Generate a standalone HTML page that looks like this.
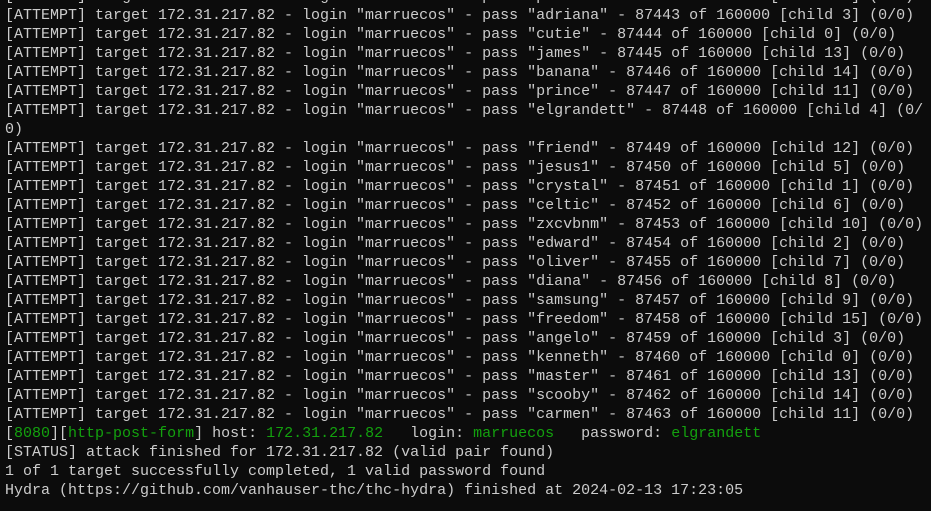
<!DOCTYPE html>
<html><head><meta charset="utf-8"><style>
html,body{margin:0;padding:0;background:#0c0c0c;width:931px;height:511px;overflow:hidden}
pre{margin:0;position:absolute;left:5px;top:-13px;font-family:"Liberation Mono",monospace;font-size:15px;line-height:19px;color:#cccccc;white-space:pre}
.g{color:#13a10e}
</style></head><body><pre>[ATTEMPT] target 172.31.217.82 - login "marruecos" - pass "passwo" - 87442 of 160000 [child 15] (0/0)
[ATTEMPT] target 172.31.217.82 - login "marruecos" - pass "adriana" - 87443 of 160000 [child 3] (0/0)
[ATTEMPT] target 172.31.217.82 - login "marruecos" - pass "cutie" - 87444 of 160000 [child 0] (0/0)
[ATTEMPT] target 172.31.217.82 - login "marruecos" - pass "james" - 87445 of 160000 [child 13] (0/0)
[ATTEMPT] target 172.31.217.82 - login "marruecos" - pass "banana" - 87446 of 160000 [child 14] (0/0)
[ATTEMPT] target 172.31.217.82 - login "marruecos" - pass "prince" - 87447 of 160000 [child 11] (0/0)
[ATTEMPT] target 172.31.217.82 - login "marruecos" - pass "elgrandett" - 87448 of 160000 [child 4] (0/
0)
[ATTEMPT] target 172.31.217.82 - login "marruecos" - pass "friend" - 87449 of 160000 [child 12] (0/0)
[ATTEMPT] target 172.31.217.82 - login "marruecos" - pass "jesus1" - 87450 of 160000 [child 5] (0/0)
[ATTEMPT] target 172.31.217.82 - login "marruecos" - pass "crystal" - 87451 of 160000 [child 1] (0/0)
[ATTEMPT] target 172.31.217.82 - login "marruecos" - pass "celtic" - 87452 of 160000 [child 6] (0/0)
[ATTEMPT] target 172.31.217.82 - login "marruecos" - pass "zxcvbnm" - 87453 of 160000 [child 10] (0/0)
[ATTEMPT] target 172.31.217.82 - login "marruecos" - pass "edward" - 87454 of 160000 [child 2] (0/0)
[ATTEMPT] target 172.31.217.82 - login "marruecos" - pass "oliver" - 87455 of 160000 [child 7] (0/0)
[ATTEMPT] target 172.31.217.82 - login "marruecos" - pass "diana" - 87456 of 160000 [child 8] (0/0)
[ATTEMPT] target 172.31.217.82 - login "marruecos" - pass "samsung" - 87457 of 160000 [child 9] (0/0)
[ATTEMPT] target 172.31.217.82 - login "marruecos" - pass "freedom" - 87458 of 160000 [child 15] (0/0)
[ATTEMPT] target 172.31.217.82 - login "marruecos" - pass "angelo" - 87459 of 160000 [child 3] (0/0)
[ATTEMPT] target 172.31.217.82 - login "marruecos" - pass "kenneth" - 87460 of 160000 [child 0] (0/0)
[ATTEMPT] target 172.31.217.82 - login "marruecos" - pass "master" - 87461 of 160000 [child 13] (0/0)
[ATTEMPT] target 172.31.217.82 - login "marruecos" - pass "scooby" - 87462 of 160000 [child 14] (0/0)
[ATTEMPT] target 172.31.217.82 - login "marruecos" - pass "carmen" - 87463 of 160000 [child 11] (0/0)
[<span class="g">8080</span>][<span class="g">http-post-form</span>] host: <span class="g">172.31.217.82</span>   login: <span class="g">marruecos</span>   password: <span class="g">elgrandett</span>
[STATUS] attack finished for 172.31.217.82 (valid pair found)
1 of 1 target successfully completed, 1 valid password found
Hydra (https://github.com/vanhauser-thc/thc-hydra) finished at 2024-02-13 17:23:05</pre></body></html>
